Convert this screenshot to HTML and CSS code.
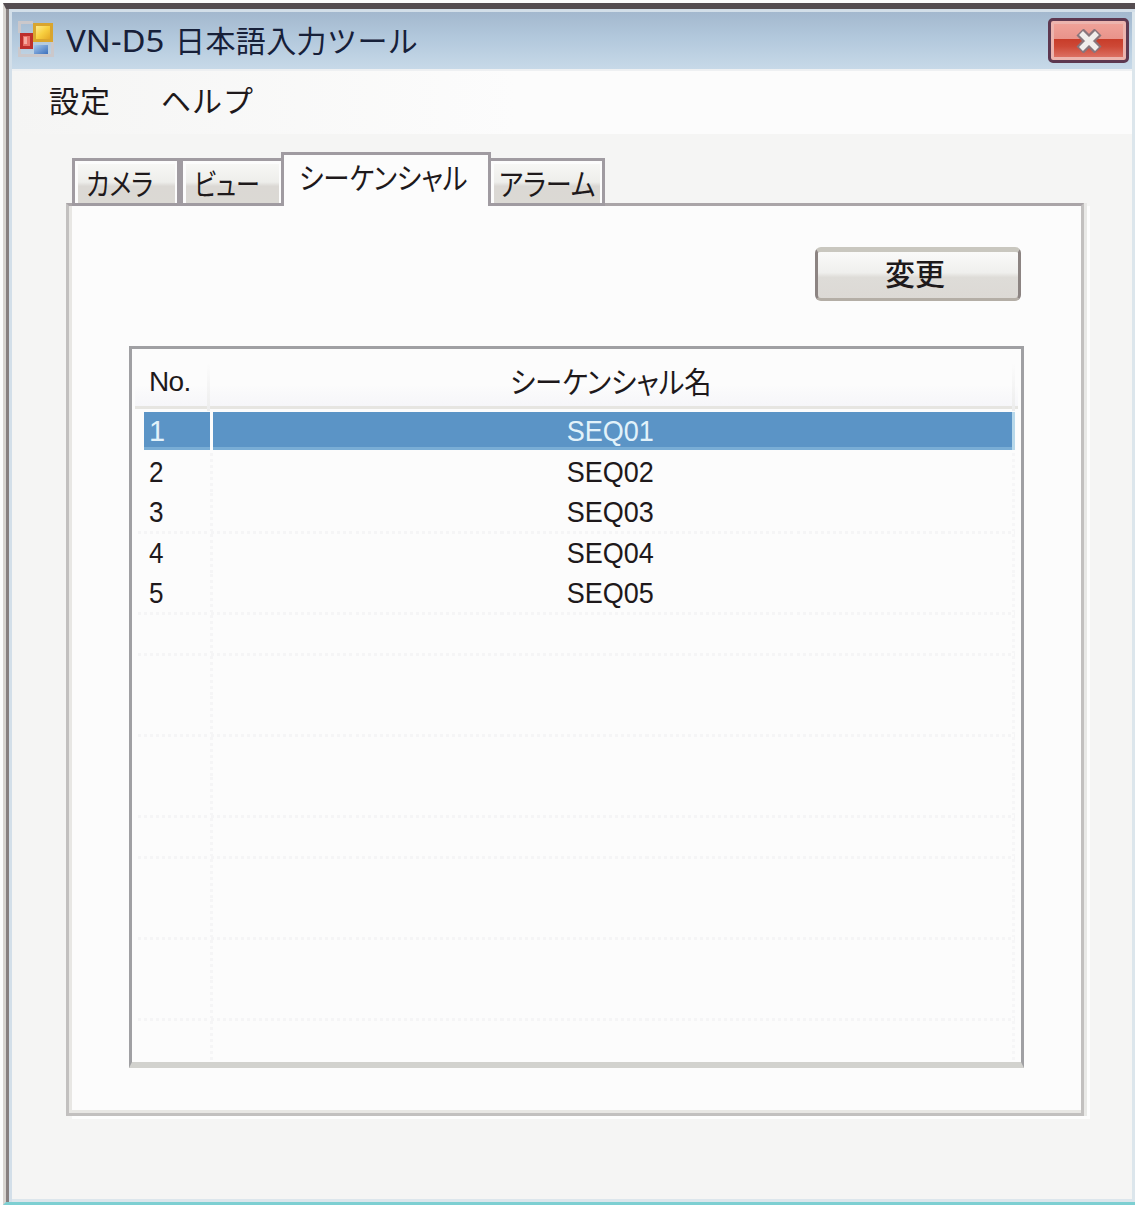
FILE: index.html
```html
<!DOCTYPE html>
<html lang="ja">
<head>
<meta charset="utf-8">
<title>VN-D5 日本語入力ツール</title>
<link rel="stylesheet" href="styles.css">
</head>
<body>
<div class="window">
  <header class="titlebar">
    <svg class="app-icon" width="36" height="36" viewBox="0 0 36 36">
      <defs>
        <linearGradient id="gold" x1="0" y1="0" x2="1" y2="1"><stop offset="0" stop-color="#fff0a0"/><stop offset=".5" stop-color="#f8d040"/><stop offset="1" stop-color="#e0a020"/></linearGradient>
        <linearGradient id="blue" x1="0" y1="0" x2="1" y2="1"><stop offset="0" stop-color="#a4c6ec"/><stop offset="1" stop-color="#3c70bc"/></linearGradient>
      </defs>
      <path d="M1.500 12V1.500H15M1.500 26V34.500H34.500V20" fill="none" stroke="#cbc8cb" stroke-width="3"/>
      <rect x="3.500" y="13.500" width="10" height="13" fill="#e87066" stroke="#bd2f2c" stroke-width="3"/>
      <rect x="6" y="16" width="3" height="7" fill="#f7aaa0"/>
      <rect x="16.500" y="3.500" width="17" height="16" fill="url(#gold)" stroke="#d9a52e" stroke-width="3"/>
      <rect x="16" y="24" width="14" height="9" fill="url(#blue)"/>
    </svg>
    <h1 class="title"><span class="title-latin">VN-D5</span><span class="title-ja">日本語入力ツール</span></h1>
    <button class="close" aria-label="閉じる">
      <svg width="28" height="24" viewBox="0 0 28 24">
        <path d="M5 3L23 21M23 3L5 21" stroke="#88757c" stroke-width="10"/>
        <path d="M6 4L22 20M22 4L6 20" stroke="#f1eeec" stroke-width="5.500"/>
      </svg>
    </button>
  </header>
  <nav class="menu"><span class="menu-settings">設定</span><span class="menu-help">ヘルプ</span></nav>
  <main class="body">
    <div class="tabs">
      <div class="tab camera"><span>カメラ</span></div>
      <div class="tab view"><span>ビュー</span></div>
      <div class="tab active"><span>シーケンシャル</span></div>
      <div class="tab alarm"><span>アラーム</span></div>
    </div>
    <section class="panel">
      <button class="change">変更</button>
      <div class="list">
        <div class="head"><span class="no">No.</span><span class="name"><span class="label">シーケンシャル名</span></span></div>
        <div class="rows">
          <div class="row selected"><span class="no">1</span><span class="name"><span class="label">SEQ01</span></span></div>
          <div class="row"><span class="no">2</span><span class="name"><span class="label">SEQ02</span></span></div>
          <div class="row line"><span class="no">3</span><span class="name"><span class="label">SEQ03</span></span></div>
          <div class="row"><span class="no">4</span><span class="name"><span class="label">SEQ04</span></span></div>
          <div class="row line"><span class="no">5</span><span class="name"><span class="label">SEQ05</span></span></div>
          <div class="row line"></div>
          <div class="row"></div>
          <div class="row line"></div>
          <div class="row"></div>
          <div class="row line"></div>
          <div class="row line"></div>
          <div class="row"></div>
          <div class="row line"></div>
          <div class="row"></div>
          <div class="row line"></div>
          <div class="row"></div>
        </div>
      </div>
    </section>
  </main>
</div>
</body>
</html>
```
FILE: styles.css
```css
* { box-sizing: border-box; }
body {
  margin: 0;
  width: 1135px;
  height: 1205px;
  overflow: hidden;
  background: #fcfcfc;
  color: #1e191b;
  font-family: "Noto Sans CJK JP", sans-serif;
  font-size: 30px;
}
button { font: inherit; color: inherit; padding: 0; }
.window {
  height: 1202px;
  margin: 3px 0 0 3px;
  border-left: 3px solid #d8d4d0;
  border-top: 6px solid #544c50;
  border-bottom: 3px solid #7dcfd2;
  box-shadow: inset 3px 0 #877f7f, inset 6px 3px #d3dfe9, inset -3px -3px #dce6ec;
  background: #f5f5f4;
  padding: 3px 3px 3px 6px;
}
.titlebar {
  height: 57px;
  display: flex;
  align-items: flex-start;
  padding: 0 3px 0 6px;
  background: linear-gradient(#a3b8ce, #b2c8dc 45%, #c7d9e8);
}
.app-icon { margin-top: 9px; }
.title {
  flex: 1;
  display: flex;
  margin: 5px 0 0 12px;
  font-size: 30px;
  font-weight: 400;
  line-height: 44px;
  white-space: nowrap;
  color: #172039;
}
.title-latin {
  width: 109px;
  font-family: "Noto Sans", sans-serif;
  line-height: 47px;
  transform: scaleX(1.1);
  transform-origin: 0 50%;
}
.title-ja { letter-spacing: 0.4px; }
.close {
  display: flex;
  align-items: center;
  justify-content: center;
  width: 81px;
  height: 45px;
  margin-top: 6px;
  border: 3px solid #5d3850;
  border-radius: 5px;
  box-shadow: inset 0 0 0 3px #ecb4ae;
  background: linear-gradient(#f0a49b, #e9938a 46%, #c83d2a 47%, #cd4836 65%, #e07a6e);
}
.menu {
  height: 65px;
  padding-left: 37px;
  border-top: 2px solid #eef0f2;
  line-height: 56px;
  display: flex;
  background: linear-gradient(90deg, #f5f5f4, #fcfcfc 45%);
}
.menu-settings { width: 112px; letter-spacing: 1px; }
.menu-help { letter-spacing: 1px; }
.body { padding: 18px 42px 0 54px; }
.tabs { display: flex; align-items: flex-end; height: 54px; padding-left: 6px; }
.tab {
  height: 48px;
  border: 3px solid #a09ba1;
  box-shadow: inset 3px 3px #fcfcfc, inset -2px 0 #fcfcfc;
  background: linear-gradient(#f8f8f6, #eeeeeb 50%, #dbd8d4 60%, #dbd9d4);
  line-height: 43px;
  white-space: nowrap;
}
.tab span { display: inline-block; transform-origin: 0 50%; font-feature-settings: "palt"; }
.camera { width: 108px; padding-left: 11px; }
.camera span { transform: scaleX(.84); }
.view { width: 101px; padding-left: 11px; border-right: 0; }
.view span { transform: scaleX(.8); }
.active {
  position: relative;
  z-index: 1;
  width: 210px;
  height: 54px;
  padding-left: 15px;
  border-bottom: 0;
  box-shadow: none;
  background: #fcfcfc;
}
.active span { transform: scaleX(.88); }
.alarm { width: 114px; padding-left: 8px; border-left: 0; }
.alarm span { transform: scaleX(.87); }
.panel {
  height: 913px;
  width: 1018px;
  margin-top: -3px;
  padding: 41px 0 0 60px;
  border: 3px solid #c2c0bf;
  border-top-color: #aaa5a8;
  box-shadow: inset 3px -3px #e8e7e4, 3px 0 #e9e9e7, 6px 3px #fdfdfd;
  background: #fcfcfc;
}
.change {
  display: block;
  width: 206px;
  height: 54px;
  margin-left: 686px;
  padding: 0 6px 6px 0;
  border: 3px solid #8c8482;
  border-top: 5px solid #c9c7bf;
  border-bottom-color: #b4aea6;
  border-radius: 6px;
  background: linear-gradient(#fafaf9, #efefed 45%, #dedcd8 55%, #dcd9d5);
  line-height: 40px;
  font-weight: 500;
}
.list {
  width: 895px;
  height: 722px;
  margin-top: 45px;
  border: 3px solid #a0a0a3;
  border-bottom: 6px solid #d2d2ce;
  padding: 3px;
  overflow: hidden;
}
.head, .row { display: grid; grid-template-columns: 75px 1fr; }
.head {
  height: 57px;
  width: 883px;
  border-bottom: 3px solid #e6e5e1;
  background: linear-gradient(#fcfcfc 60%, #f6f6f9);
  line-height: 57px;
}
.head .no, .head .name {
  border: solid;
  border-image: linear-gradient(#fcfcfc 20%, #ececec) 1;
  border-width: 0 3px 0 0;
}
.head .no { padding-left: 14px; line-height: 59px; font-size: 28px; letter-spacing: -0.7px; }
.head .name { margin-right: 3px; }
.no, .row .name { font-family: "Liberation Sans", sans-serif; }
.name { text-align: center; }
.label { display: inline-block; white-space: nowrap; }
.head .label { font-size: 30px; font-feature-settings: "palt"; transform: scaleX(.91); }
.rows { padding-top: 3px; }
.row {
  height: 40.6px;
  width: 880px;
  line-height: 38px;
  grid-template-columns: 78px 1fr;
  background:
    repeating-linear-gradient(#f5f5f6 0 3px, transparent 3px 6px) 75px 0 / 3px 100% no-repeat,
    repeating-linear-gradient(#f6f6f7 0 3px, transparent 3px 6px) 877px 0 / 3px 100% no-repeat;
}
.row.line { border: solid; border-image: repeating-linear-gradient(90deg, #f5f5f6 0 3px, #fcfcfc 3px 6px) 3; border-width: 0 0 3px; }
.row .no { padding-left: 14px; font-size: 29px; }
.row .name { padding-right: 8px; font-size: 30px; }
.row .no, .row .label { transform: scaleX(.9); transform-origin: 14px 50%; }
.row .label { transform-origin: 50% 50%; }
.row.selected { padding-bottom: 2.6px; background: none; color: #e2f2fa; }
.selected .no { transform: none; margin: 0 3px 0 9px; padding-left: 5px; background: #5b94c6; box-shadow: inset 0 -3px #79add5; }
.selected .name { background: #5b94c6; box-shadow: inset -3px 0 #b8d8ea, inset 0 -3px #79add5; }
```
